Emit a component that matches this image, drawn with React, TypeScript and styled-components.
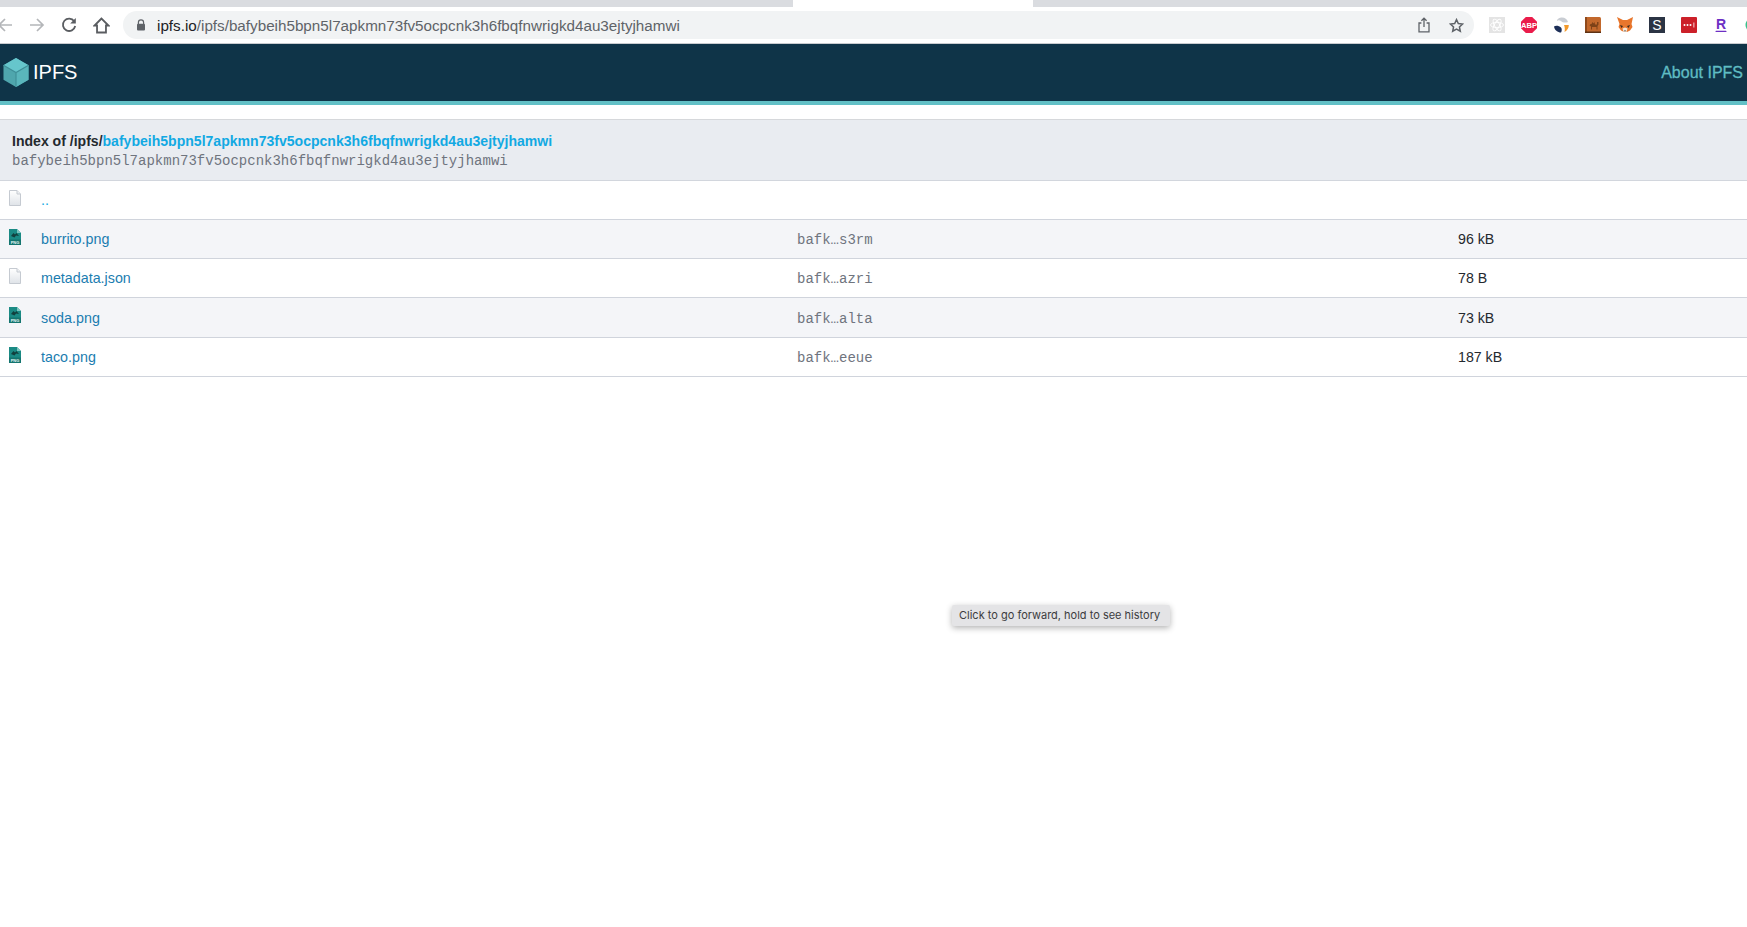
import React from 'react';
import styled, { createGlobalStyle } from 'styled-components';

const GlobalStyle = createGlobalStyle`
  html, body {
    margin: 0;
    padding: 0;
    background: #fff;
    font-family: 'Liberation Sans', Arial, sans-serif;
  }
`;

const Page = styled.div`
  position: relative;
  width: 1747px;
  height: 927px;
  overflow: hidden;
  background: #fff;
`;

const TabStrip = styled.div`
  display: flex;
  height: 7px;
  background: #dadce0;
`;

const ActiveTab = styled.div`
  width: 240px;
  margin-left: 793px;
  background: #fff;
`;

const Toolbar = styled.div`
  display: flex;
  align-items: center;
  height: 36px;
  background: #fff;
  border-bottom: 1px solid #c9cbcf;
`;

const NavGroup = styled.div`
  display: flex;
  align-items: center;
  flex: none;
  margin-left: -11px;
`;

const NavButton = styled.div`
  display: flex;
  align-items: center;
  justify-content: center;
  flex: none;
  width: 32px;
`;

const Omnibox = styled.div`
  display: flex;
  align-items: center;
  flex: none;
  box-sizing: border-box;
  width: 1351px;
  height: 28px;
  margin-left: 6px;
  padding-left: 13px;
  border-radius: 14px;
  background: #f1f3f4;
  font-size: 15.22px;
  color: #5f6368;
`;

const Host = styled.span`
  margin-left: 11px;
  color: #202124;
`;

const OmniActions = styled.div`
  display: flex;
  align-items: center;
  gap: 18px;
  margin-left: auto;
  margin-right: 10px;
`;

const Extensions = styled.div`
  display: flex;
  align-items: center;
  margin-left: 7px;
`;

const Ext = styled.div`
  display: flex;
  align-items: center;
  justify-content: center;
  flex: none;
  width: 32px;
`;

const Banner = styled.header`
  display: flex;
  align-items: center;
  justify-content: space-between;
  height: 57px;
  background: #0f3448;
  border-bottom: 4px solid #62c0c6;
`;

const Brand = styled.div`
  display: flex;
  align-items: center;
  gap: 4px;
  margin-left: 3px;
  font-size: 20px;
  color: #fff;
`;

const AboutLink = styled.a`
  margin-right: 4px;
  font-size: 16px;
  color: #5fbcc3;
  -webkit-text-stroke: 0.3px #5fbcc3;
`;

const Listing = styled.main`
  margin-top: 14px;
  border-top: 1px solid #d6d8db;
`;

const IndexHeader = styled.div`
  box-sizing: border-box;
  height: 61px;
  padding: 11px 12px 0;
  background: #e9ecf1;
  border-bottom: 1px solid #d2d6dd;
`;

const IndexTitle = styled.div`
  font-size: 14.05px;
  line-height: 20px;
  font-weight: 700;
  color: #24292e;
  a {
    color: #12a9e3;
  }
`;

const IndexCid = styled.div`
  font-family: 'Liberation Mono', 'Courier New', monospace;
  font-size: 14px;
  line-height: 20px;
  color: #6f747e;
`;

const Row = styled.div<{ $shaded: boolean; $h: number }>`
  display: grid;
  grid-template-columns: 41px 756px 661px 1fr;
  align-items: center;
  box-sizing: border-box;
  height: ${(p) => p.$h}px;
  background: ${(p) => (p.$shaded ? '#f4f5f8' : '#fff')};
  border-bottom: 1px solid #d0d4dc;
`;

const IconCell = styled.div`
  display: flex;
  padding-left: 9px;
  margin-top: -5px;
`;

const NameLink = styled.a<{ $up: boolean }>`
  font-size: 14.3px;
  color: ${(p) => (p.$up ? '#12a9e3' : '#1b7db0')};
`;

const HashCell = styled.div`
  padding-top: 2px;
  font-family: 'Liberation Mono', 'Courier New', monospace;
  font-size: 14px;
  color: #6f747e;
`;

const SizeCell = styled.div`
  font-size: 14.2px;
  color: #24292e;
`;

const Tooltip = styled.div`
  position: absolute;
  left: 952px;
  top: 605px;
  box-sizing: border-box;
  width: 218px;
  height: 21px;
  padding-left: 7px;
  border-radius: 2px;
  background: #e4e4e6;
  box-shadow: 0 2px 6px rgba(0, 0, 0, 0.3);
  font-family: 'Inter', 'Liberation Sans', sans-serif;
  font-size: 11px;
  line-height: 21px;
  color: #3c3c40;
  white-space: nowrap;
`;

const BackIcon = ({ color }: { color: string }) => (
  <svg width="16" height="16" viewBox="0 0 16 16" fill="none" stroke={color} strokeWidth="1.7">
    <path d="M15 8H2M8 2L2 8l6 6" />
  </svg>
);

const ForwardIcon = ({ color }: { color: string }) => (
  <svg width="16" height="16" viewBox="0 0 16 16" fill="none" stroke={color} strokeWidth="1.7">
    <path d="M1 8h13M8 2l6 6-6 6" />
  </svg>
);

const ReloadIcon = () => (
  <svg width="16" height="16" viewBox="0 0 16 16" fill="none">
    <path d="M13.200 4.200A6.200 6.200 0 1 0 14.200 9" stroke="#5a5d61" strokeWidth="1.800" />
    <path d="M14.800 1v5.600H9.200z" fill="#5a5d61" />
  </svg>
);

const HomeIcon = () => (
  <svg width="17" height="17" viewBox="0 0 16 16" fill="none" stroke="#5a5d61" strokeWidth="1.700">
    <path d="M8 1.400L1.400 8h2.400v6.600h8.400V8h2.400z" />
  </svg>
);

const LockIcon = () => (
  <svg width="10" height="12" viewBox="0 0 10 12">
    <path d="M2.400 5V3.400a2.600 2.600 0 0 1 5.200 0V5" fill="none" stroke="#5f6368" strokeWidth="1.200" />
    <rect x="1" y="4.800" width="8" height="6.600" rx="1" fill="#5f6368" />
  </svg>
);

const ShareIcon = () => (
  <svg width="14" height="16" viewBox="0 0 14 16" fill="none" stroke="#5f6368" strokeWidth="1.300">
    <path d="M4.400 6H2v8.800h10V6H9.600M7 10V1.400M4.400 3.800L7 1.200l2.600 2.600" />
  </svg>
);

const StarIcon = () => (
  <svg width="15" height="15" viewBox="0 0 24 24" fill="none" stroke="#5f6368" strokeWidth="2.400">
    <path d="M12 2.600l2.900 6.300 6.900.8-5.100 4.700 1.400 6.800-6.100-3.400-6.100 3.400 1.400-6.800L2.200 9.700l6.900-.8z" />
  </svg>
);

const ReactExt = () => (
  <svg width="16" height="16" viewBox="0 0 16 16">
    <rect width="16" height="16" fill="#e4e4e4" />
    <g fill="none" stroke="#fff" strokeWidth="0.900">
      <ellipse cx="8" cy="8" rx="6.500" ry="2.600" />
      <ellipse cx="8" cy="8" rx="6.500" ry="2.600" transform="rotate(60 8 8)" />
      <ellipse cx="8" cy="8" rx="6.500" ry="2.600" transform="rotate(120 8 8)" />
    </g>
  </svg>
);

const AbpExt = () => (
  <svg width="16" height="16" viewBox="0 0 16 16">
    <path d="M4.800 0h6.400L16 4.800v6.400L11.200 16H4.800L0 11.200V4.800z" fill="#ea1c4b" />
    <text x="8" y="10.800" textAnchor="middle" fontFamily="Liberation Sans" fontWeight="700" fontSize="7.600" fill="#fff">ABP</text>
  </svg>
);

const SwirlExt = () => (
  <svg width="16" height="16" viewBox="0 0 16 16">
    <path d="M1 9.500C2.500 8 6 8.500 8 10.500 9 11.800 9 14 8 15.500 4.500 15.500 1.500 13 1 9.500z" fill="#1d2f58" />
    <path d="M4 4C4 2 6.500.5 9 .5c3 0 5 1.500 6 4.500-2.500 1.200-5.500.5-7-1C6.500 3 5 3 4 4z" fill="#c9cdd3" />
    <path d="M11 8h4.800c0 3-1.500 5.500-4.300 7 .5-2 .5-4.500-.5-7z" fill="#f39a2b" />
  </svg>
);

const CamelExt = () => (
  <svg width="16" height="16" viewBox="0 0 16 16">
    <rect width="16" height="16" rx="1.500" fill="#c2682c" />
    <rect x="0" y="0" width="2" height="16" fill="#8f4a1c" />
    <rect x="0" y="14.500" width="16" height="1.500" fill="#5d3214" />
    <path d="M4.500 8.500l1-1.500h1l1-2 1 1.500 1-1.500.5 2.500h2V5h1.500v2.500l-1 1.500v3.500h-1V10H7v2.500H6V9.500z" fill="#7d4218" />
  </svg>
);

const FoxExt = () => (
  <svg width="16" height="16" viewBox="0 0 16 16">
    <path d="M0 0l6 3h4l6-3-1.500 7 1 3-2.500 3.500-3 1.500H7l-3-1.500L1.500 10l1-3z" fill="#e8762c" />
    <path d="M3 8l3 1-1.500 2zM13 8l-3 1 1.500 2z" fill="#3a2a1e" />
    <path d="M5.500 11.500L8 10.500l2.500 1L9.500 15h-3z" fill="#f3e3d3" />
    <path d="M7 13.500h2l-1 1.200z" fill="#2b2b2b" />
  </svg>
);

const SExt = () => (
  <svg width="16" height="16" viewBox="0 0 16 16">
    <rect width="16" height="16" fill="#2b3444" />
    <text x="8" y="13" textAnchor="middle" fontFamily="Liberation Sans" fontSize="14" fill="#fff">S</text>
  </svg>
);

const PassExt = () => (
  <svg width="16" height="16" viewBox="0 0 16 16">
    <rect width="16" height="16" rx="1" fill="#cc2029" />
    <circle cx="3.500" cy="8" r="1" fill="#fff" />
    <circle cx="6.500" cy="8" r="1" fill="#fff" />
    <circle cx="9.500" cy="8" r="1" fill="#fff" />
    <rect x="12.500" y="5.500" width="0.800" height="5" fill="#fff" />
  </svg>
);

const RExt = () => (
  <svg width="16" height="16" viewBox="0 0 16 16">
    <text x="8" y="12" textAnchor="middle" fontFamily="Liberation Sans" fontWeight="700" fontSize="14" fill="#6d2fc4">R</text>
    <rect x="2.500" y="13.800" width="11" height="1.200" rx="0.600" fill="#6d2fc4" />
  </svg>
);

const GreenExt = () => (
  <svg width="16" height="16" viewBox="0 0 16 16">
    <circle cx="8" cy="8" r="7.500" fill="#38c08c" />
  </svg>
);

// the hexagon cube from the ipfs gateway header
const CubeLogo = () => (
  <svg width="26" height="29" viewBox="0 0 27 30">
    <path d="M13.500 0L26.500 7.500V22.500L13.500 30L.5 22.500V7.500z" fill="#4fa6ad" />
    <path d="M13.500 0L26.500 7.500L13.500 15L.5 7.500z" fill="#66c6cc" />
    <path d="M13.500 15L26.500 7.500V22.500L13.500 30z" fill="#5ab6bc" />
    <path d="M.5 7.500L13.500 15L26.500 7.500M13.500 15V30" fill="none" stroke="#3f8f98" strokeWidth="1.200" />
  </svg>
);

const BlankFile = () => (
  <svg width="12" height="16" viewBox="0 0 12 16">
    <defs>
      <linearGradient id="blankFill" x1="0" y1="0" x2="0" y2="1">
        <stop offset="0" stopColor="#ffffff" />
        <stop offset="1" stopColor="#dfe3e8" />
      </linearGradient>
    </defs>
    <path d="M.5.5H8L11.500 4V15.500H.5z" fill="url(#blankFill)" stroke="#c5cad1" />
    <path d="M8 .5V4h3.500" fill="#eef0f3" stroke="#c5cad1" />
  </svg>
);

const PngFile = () => (
  <svg width="12" height="16" viewBox="0 0 12 16">
    <path d="M0 0H8L12 4V16H0z" fill="#1a8a84" />
    <path d="M8 0V4H12z" fill="#7cc4bf" />
    <path d="M2 7L4.500 4 6 5.500 7.500 4 10 7 7 6.500 5.500 8.500z" fill="#123f3d" />
    <rect x="0" y="10.500" width="12" height="5.500" fill="#14756f" />
    <text x="6" y="14.800" textAnchor="middle" fontFamily="Liberation Sans" fontWeight="700" fontSize="4" fill="#e8f5f4">PNG</text>
  </svg>
);

const CID = 'bafybeih5bpn5l7apkmn73fv5ocpcnk3h6fbqfnwrigkd4au3ejtyjhamwi';

const rows = [
  { name: '..', hash: '', size: '', png: false, h: 39 },
  { name: 'burrito.png', hash: 'bafk…s3rm', size: '96 kB', png: true, h: 39 },
  { name: 'metadata.json', hash: 'bafk…azri', size: '78 B', png: false, h: 39 },
  { name: 'soda.png', hash: 'bafk…alta', size: '73 kB', png: true, h: 40 },
  { name: 'taco.png', hash: 'bafk…eeue', size: '187 kB', png: true, h: 39 },
];

export default function App() {
  return (
    <Page>
      <GlobalStyle />
      <TabStrip>
        <ActiveTab />
      </TabStrip>
      <Toolbar>
        <NavGroup>
          <NavButton>
            <BackIcon color="#b4b6b9" />
          </NavButton>
          <NavButton>
            <ForwardIcon color="#b4b6b9" />
          </NavButton>
          <NavButton>
            <ReloadIcon />
          </NavButton>
          <NavButton>
            <HomeIcon />
          </NavButton>
        </NavGroup>
        <Omnibox>
          <LockIcon />
          <Host>ipfs.io</Host>/ipfs/{CID}
          <OmniActions>
            <ShareIcon />
            <StarIcon />
          </OmniActions>
        </Omnibox>
        <Extensions>
          <Ext><ReactExt /></Ext>
          <Ext><AbpExt /></Ext>
          <Ext><SwirlExt /></Ext>
          <Ext><CamelExt /></Ext>
          <Ext><FoxExt /></Ext>
          <Ext><SExt /></Ext>
          <Ext><PassExt /></Ext>
          <Ext><RExt /></Ext>
          <Ext><GreenExt /></Ext>
        </Extensions>
      </Toolbar>
      <Banner>
        <Brand>
          <CubeLogo />
          IPFS
        </Brand>
        <AboutLink>About IPFS</AboutLink>
      </Banner>
      <Listing>
        <IndexHeader>
          <IndexTitle>
            Index of /ipfs/<a>{CID}</a>
          </IndexTitle>
          <IndexCid>{CID}</IndexCid>
        </IndexHeader>
        {rows.map((row, i) => (
          <Row key={row.name} $shaded={i % 2 === 1} $h={row.h}>
            <IconCell>{row.png ? <PngFile /> : <BlankFile />}</IconCell>
            <NameLink $up={row.name === '..'}>{row.name}</NameLink>
            <HashCell>{row.hash}</HashCell>
            <SizeCell>{row.size}</SizeCell>
          </Row>
        ))}
      </Listing>
      <Tooltip>Click to go forward, hold to see history</Tooltip>
    </Page>
  );
}
